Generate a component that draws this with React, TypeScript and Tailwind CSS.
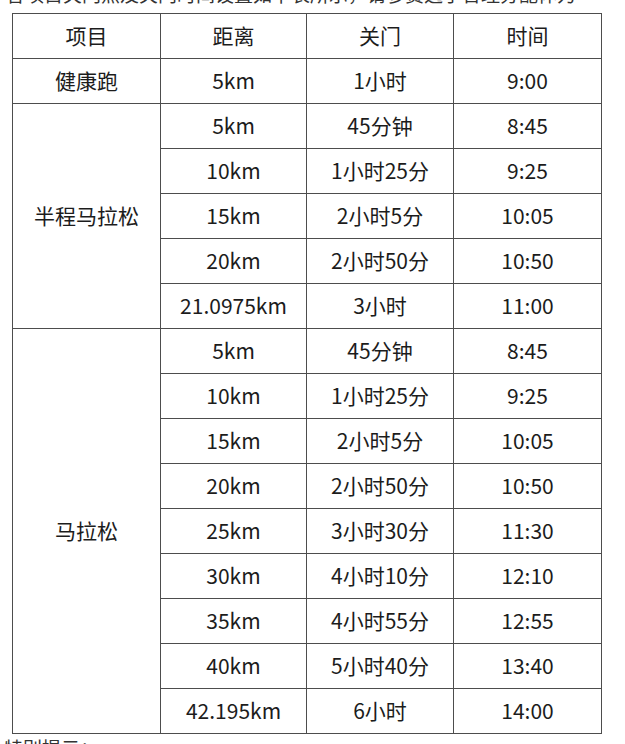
const half = [
  ['5km', '45分钟', '8:45'],
  ['10km', '1小时25分', '9:25'],
  ['15km', '2小时5分', '10:05'],
  ['20km', '2小时50分', '10:50'],
  ['21.0975km', '3小时', '11:00'],
];

const full = [
  ['5km', '45分钟', '8:45'],
  ['10km', '1小时25分', '9:25'],
  ['15km', '2小时5分', '10:05'],
  ['20km', '2小时50分', '10:50'],
  ['25km', '3小时30分', '11:30'],
  ['30km', '4小时10分', '12:10'],
  ['35km', '4小时55分', '12:55'],
  ['40km', '5小时40分', '13:40'],
  ['42.195km', '6小时', '14:00'],
];

const cell = 'border-[1.5px] border-[#4d4d4d] text-center align-middle p-0';

function Group({ name, rows }: { name: string; rows: string[][] }) {
  return (
    <>
      {rows.map((r, i) => (
        <tr key={i} className="h-[45px]">
          {i === 0 && (
            <td rowSpan={rows.length} className={cell}>
              {name}
            </td>
          )}
          {r.map((v, j) => (
            <td key={j} className={cell}>
              {v}
            </td>
          ))}
        </tr>
      ))}
    </>
  );
}

export default function App() {
  return (
    <div
      className="w-[625px] h-[744px] overflow-hidden bg-white text-[#1c1c1c] text-[21px]"
      style={{ fontFamily: '"Noto Sans CJK SC", "Noto Sans", sans-serif' }}
    >
      <div className="h-[13px] overflow-hidden flex items-end pl-[6px]">
        <p className="text-[19px] leading-[22px] mb-[8px] text-[#333] whitespace-nowrap">
          各项目关门点及关门时间设置如下表所示，请参赛选手合理分配体力
        </p>
      </div>
      <table className="ml-[12px] border-collapse table-fixed w-[589px]">
        <colgroup>
          <col className="w-[148px]" />
          <col className="w-[146px]" />
          <col className="w-[147px]" />
          <col className="w-[148px]" />
        </colgroup>
        <tbody>
          <tr className="h-[45px]">
            <td className={cell}>项目</td>
            <td className={cell}>距离</td>
            <td className={cell}>关门</td>
            <td className={cell}>时间</td>
          </tr>
          <tr className="h-[45px]">
            <td className={cell}>健康跑</td>
            <td className={cell}>5km</td>
            <td className={cell}>1小时</td>
            <td className={cell}>9:00</td>
          </tr>
          <Group name="半程马拉松" rows={half} />
          <Group name="马拉松" rows={full} />
        </tbody>
      </table>
      <p className="pl-[4px] mt-[3px] text-[19px] leading-[22px] text-[#333] whitespace-nowrap">
        特别提示：
      </p>
    </div>
  );
}
